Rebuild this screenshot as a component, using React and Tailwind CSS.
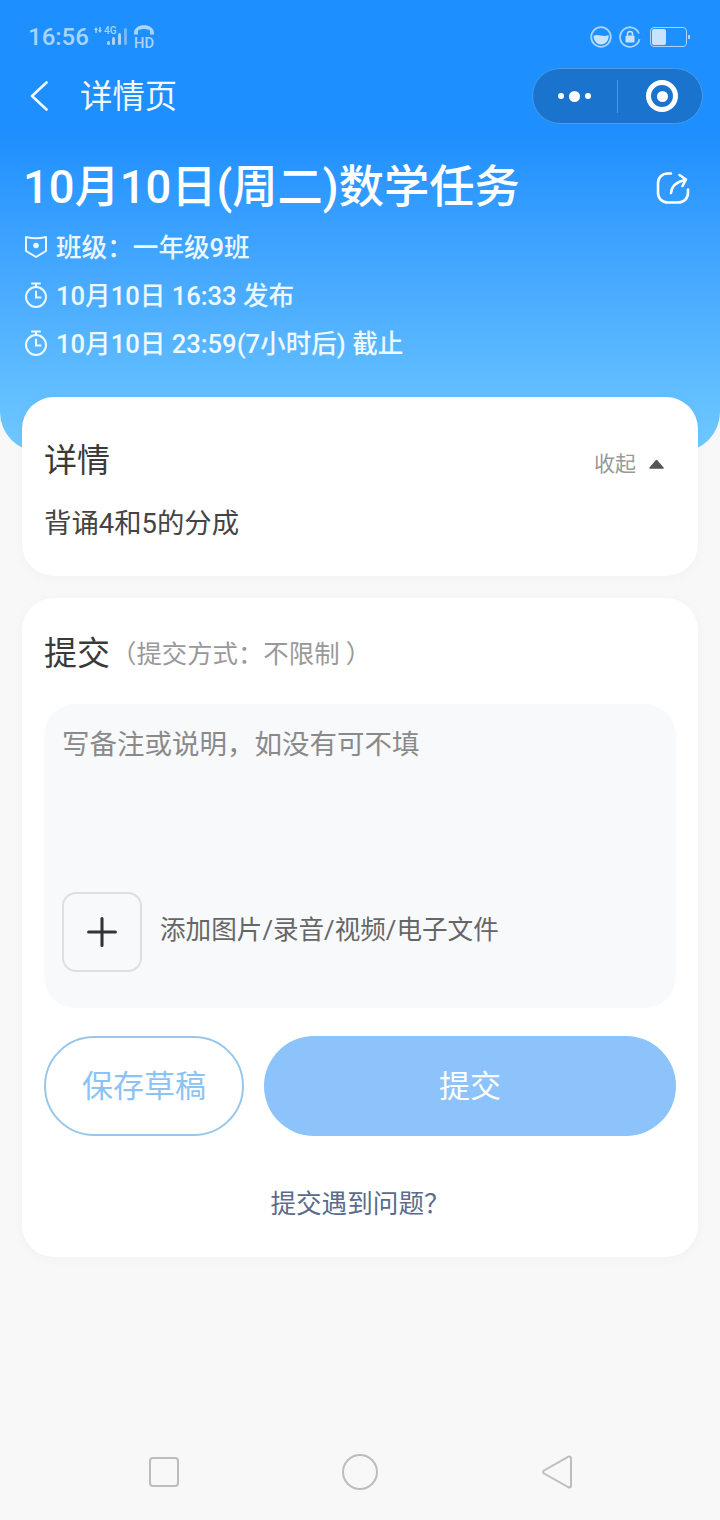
import { Plus } from "lucide-react";

const FONT = "font-['Roboto','Noto_Sans_CJK_SC',sans-serif]";

const ClockIcon = () => (
  <svg width="26" height="28" viewBox="0 0 26 28" fill="none" stroke="currentColor" strokeWidth="2" strokeLinecap="round" className="shrink-0 -mt-[3px]">
    <path d="M9 2.500h8M13 2.500v3.500" />
    <circle cx="13" cy="16" r="10" />
    <path d="M13 10.500V16.500h4.500" />
  </svg>
);

const ShieldIcon = () => (
  <svg width="26" height="26" viewBox="0 0 26 26" fill="none" stroke="currentColor" strokeWidth="2" strokeLinejoin="round" className="shrink-0 -mt-[3px]">
    <path d="M3 3Q13 5.500 23 3V17L13 23 3 17z" />
    <circle cx="13" cy="11.500" r="2.800" fill="currentColor" stroke="none" />
  </svg>
);

const StatusBar = () => (
  <div className="flex h-[68px] items-center justify-between pl-[28px] pr-[30px] pt-[6px] text-[#a8d4ff]">
    <div className="flex items-center gap-[4px]">
      <span className="text-[24px] font-medium leading-none">16:56</span>
      <svg width="62" height="28" viewBox="0 -1 62 28" fill="currentColor">
        <path d="M3 3l2 3H3.800v3H2.300V6H1zM7 9L5 6h1.200V3h1.500v3H9z" />
        <text x="11" y="10" fontSize="10" fontWeight="500">4G</text>
        <rect x="14" y="17" width="3" height="4" rx="1.500" />
        <rect x="19" y="13" width="3" height="8" rx="1.500" />
        <rect x="25" y="9" width="3" height="12" rx="1.500" />
        <rect x="31" y="4" width="3" height="17" rx="1.500" opacity="0.6" />
        <path d="M41 9c0-10.500 20-10.500 20 0v1.500h-4V6.500c-3-2-9-2-12 0v4h-4z" />
        <text x="41" y="24" fontSize="15" fontWeight="500" textLength="20" lengthAdjust="spacingAndGlyphs">HD</text>
      </svg>
    </div>
    <div className="flex items-center">
      <svg width="22" height="22" viewBox="0 0 22 22" fill="none">
        <circle cx="11" cy="11" r="9.800" stroke="currentColor" strokeWidth="1.800" />
        <path d="M3.500 10c4-3 10 2 15-1 1 5-3 9.500-7.500 9.500S3.500 14 3.500 10z" fill="#c9e3ff" />
      </svg>
      <svg width="22" height="22" viewBox="0 0 22 22" fill="none" className="ml-[7px]">
        <path d="M20 7.500A9.800 9.800 0 1 0 20.500 13" stroke="currentColor" strokeWidth="1.800" />
        <rect x="6.500" y="9.500" width="9" height="7" rx="1" fill="#c9e3ff" />
        <path d="M8.500 9.500V8a2.500 2.500 0 0 1 5 0v1.500" stroke="#c9e3ff" strokeWidth="1.500" />
      </svg>
      <div className="ml-[9px] flex items-center">
        <div className="h-[20px] w-[37px] rounded-[4px] border border-[#a8d4ff] p-[1px]">
          <div className="h-full w-[14px] rounded-[2px] bg-[#c9e3ff]" />
        </div>
        <div className="ml-[1px] h-[4px] w-[2px] bg-[#a8d4ff]" />
      </div>
    </div>
  </div>
);

const NavBar = () => (
  <div className="flex h-[56px] items-center pl-[30px] pr-[17px]">
    <svg width="18" height="30" viewBox="0 0 18 30" fill="none" stroke="currentColor" strokeWidth="2.600" strokeLinecap="round" strokeLinejoin="round" className="text-white/95">
      <path d="M16.500 1.500L2 15l14.500 13.500" />
    </svg>
    <span className="ml-[32px] pt-[3px] text-[32.4px] leading-none text-white/95">详情页</span>
    <div className="ml-auto flex h-[56px] w-[171px] items-center rounded-full border border-[#4a9bea] bg-[#1a73cc]">
      <div className="flex w-[84px] items-center justify-center gap-[5px] pr-[1px]">
        <span className="size-[6px] rounded-full bg-white" />
        <span className="size-[11px] rounded-full bg-white" />
        <span className="size-[6px] rounded-full bg-white" />
      </div>
      <div className="h-[33px] w-px bg-[#4a9bea]" />
      <div className="flex flex-1 items-center justify-center pl-[4px]">
        <div className="flex size-[32px] items-center justify-center rounded-full border-[5px] border-white">
          <span className="size-[11px] rounded-full bg-white" />
        </div>
      </div>
    </div>
  </div>
);

const Header = () => (
  <div className="h-[452px] rounded-b-[40px] bg-linear-to-b from-[#1e8fff] from-[30%] to-[#6fc8ff] text-white">
    <StatusBar />
    <NavBar />
    <div className="flex items-center justify-between pl-[23px] pr-[30px] pt-[37px]">
      <h1 className="text-[45.3px] font-medium leading-[54px]">10月10日(周二)数学任务</h1>
      <svg width="34" height="34" viewBox="0 0 34 34" fill="none" stroke="currentColor" strokeWidth="2.600" strokeLinecap="round" strokeLinejoin="round">
        <path d="M15 2.500H12C6 2.500 2 6.500 2 12.500v9C2 27.500 6 31.500 12 31.500h10c6 0 10-4 10-10v-3" />
        <path d="M15 22c.5-6 5-11 14-13M23.500 4l6.500 4.500-3.500 6.500" />
      </svg>
    </div>
    <div className="mt-[16px] flex flex-col gap-[14px] pl-[23px] text-[25.6px] font-medium leading-[34px] text-white/90">
      <div className="flex items-center gap-[7px]"><ShieldIcon /><span>{"班级\uFF1A一年级9班"}</span></div>
      <div className="flex items-center gap-[7px]"><ClockIcon /><span>10月10日 16:33 发布</span></div>
      <div className="flex items-center gap-[7px]"><ClockIcon /><span>10月10日 23:59(7小时后) 截止</span></div>
    </div>
  </div>
);

const DetailCard = () => (
  <div className="mx-[22px] -mt-[55px] h-[179px] rounded-[32px] bg-white pl-[22px] pr-[22px] pt-[38px] shadow-[0_2px_12px_rgba(0,0,0,0.03)]">
    <div className="flex items-center justify-between pr-[12px]">
      <h2 className="pt-[4px] text-[33px] leading-[44px] text-[#3a3a3a]">详情</h2>
      <div className="flex items-center gap-[13px] pt-[10px]">
        <span className="text-[21px] leading-none text-[#999]">收起</span>
        <svg width="15" height="10" viewBox="0 0 15 10" fill="#555" stroke="#555" strokeWidth="1.500" strokeLinejoin="round"><path d="M7.500 1.500L14 9H1z" /></svg>
      </div>
    </div>
    <p className="mt-[23px] text-[27.4px] leading-[36px] text-[#444]">背诵4和5的分成</p>
  </div>
);

const SubmitCard = () => (
  <div className="mx-[22px] mt-[22px] h-[659px] rounded-[32px] bg-white px-[22px] pt-[34px] shadow-[0_2px_12px_rgba(0,0,0,0.03)]">
    <div className="flex items-center">
      <h2 className="text-[33px] leading-[44px] text-[#3a3a3a]">提交</h2>
      <span className="ml-px text-[25.4px] text-[#999]">{"\uFF08提交方式\uFF1A不限制 \uFF09"}</span>
    </div>
    <div className="mt-[28px] flex h-[304px] flex-col justify-between rounded-[32px] bg-[#f8f9fb] pb-[36px] pl-[18px] pt-[20px]">
      <p className="pt-[2px] text-[27.5px] leading-[38px] text-[#8a8a8a]">{"写备注或说明\uFF0C如没有可不填"}</p>
      <div className="flex items-center gap-[18px]">
        <div className="flex size-[80px] items-center justify-center rounded-[14px] border-2 border-[#dfdfdf]">
          <Plus size={46} strokeWidth={1.6} className="text-[#333]" />
        </div>
        <span className="pb-[3px] text-[25.6px] leading-none text-[#666]">添加图片/录音/视频/电子文件</span>
      </div>
    </div>
    <div className="mt-[28px] flex gap-[20px]">
      <button className="h-[100px] w-[200px] rounded-full border-2 border-[#99c7ec] pt-[2px] text-[31px] text-[#8cc3f5]">保存草稿</button>
      <button className="h-[100px] flex-1 rounded-full bg-[#8cc3fb] pt-[2px] text-[31px] text-white">提交</button>
    </div>
    <p className="mt-[51px] text-center text-[25.6px] leading-[34px] text-[#5a6b8c]">{"提交遇到问题\uFF1F"}</p>
  </div>
);

const BottomNav = () => (
  <div className="mt-auto flex h-[96px] items-center justify-center gap-[163px] pl-[2px] text-[#bdbdbd]">
    <div className="size-[30px] rounded-[4px] border-2 border-[#bdbdbd]" />
    <div className="size-[36px] rounded-full border-2 border-[#bdbdbd]" />
    <svg width="32" height="36" viewBox="0 0 32 36" fill="none" stroke="currentColor" strokeWidth="2" strokeLinejoin="round">
      <path d="M27 2.800Q30 1.500 30 4.500V31.500Q30 34.500 27 33L3 19.500Q1 18 3 16.500z" />
    </svg>
  </div>
);

export default function App() {
  return (
    <div className={`flex h-[1520px] w-[720px] flex-col overflow-hidden bg-[#f8f8f8] ${FONT}`}>
      <Header />
      <DetailCard />
      <SubmitCard />
      <BottomNav />
    </div>
  );
}
